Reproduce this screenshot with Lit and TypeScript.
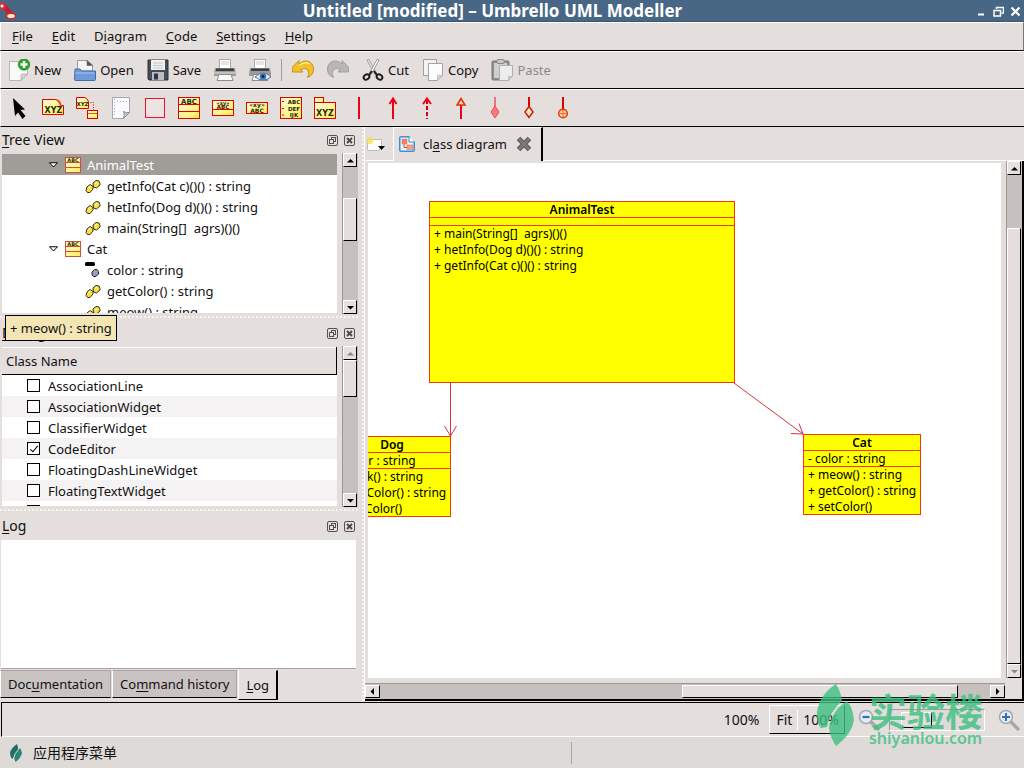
import { LitElement, html, css, svg, nothing } from "lit";
import type { TemplateResult } from "lit";
import { customElement, property } from "lit/decorators.js";
import { classMap } from "lit/directives/class-map.js";

/* ---------- helpers ---------- */

/** Renders "&File" with the letter after the ampersand underlined. */
const mnemonic = (label: string) => {
  const at = label.indexOf("&");
  if (at < 0) return html`<span>${label}</span>`;
  return html`<span>${label.slice(0, at)}<u>${label[at + 1]}</u>${label.slice(at + 2)}</span>`;
};

const frame = (size: number, body: unknown, box = size) =>
  html`<svg width=${size} height=${size} viewBox="0 0 ${box} ${box}" aria-hidden="true">${body}</svg>`;

const iconText = (x: number, y: number, size: number, text: string) =>
  svg`<text x=${x} y=${y} font-size=${size} font-family="DejaVu Sans, sans-serif" font-weight="bold" text-anchor="middle" fill="#2a2a00">${text}</text>`;

/* ---------- icons ---------- */

const gradients = svg`<defs>
  <linearGradient id="y" x1="0" y1="0" x2="1" y2="1"><stop offset="0" stop-color="#fffbe0"/><stop offset="1" stop-color="#ffee55"/></linearGradient>
</defs>`;

const icons: Record<string, () => TemplateResult> = {
  new: () => frame(22, svg`
    <path d="M1.500 2.500H19.500V15L13 21.500H1.500Z" fill="#fafafa" stroke="#b9b9b9"/>
    <path d="M13 21.500V16Q13 15 14 15H19.500Z" fill="#d4d4d4" stroke="#a8a8a8" stroke-width=".7"/>
    <circle cx="16" cy="5.500" r="5.800" fill="#2da32d" stroke="#15801b" stroke-width=".6"/>
    <path d="M16 2V9M12.500 5.500H19.500" stroke="#fff" stroke-width="2.400"/>`),
  open: () => frame(22, svg`
    <path d="M3.500 12V1.500H13L18.500 6V12Z" fill="#f4f4f4" stroke="#9a9a9a"/>
    <path d="M13 1.500V6.500H18.500Z" fill="#555" stroke="#666" stroke-width=".6"/>
    <path d="M1 10H6L8 12H21.500V20.500Q21.500 21.500 20.500 21.500H1.500Q.5 21.500.5 20.500Z" fill="#6f9bd8" stroke="#3f6cad"/>
    <path d="M1.500 14H20.500" stroke="#a9c6ef"/>`),
  save: () => frame(22, svg`
    <path d="M1 1H21V21H2L1 20Z" fill="#454d57" stroke="#2b3036"/>
    <rect x="4" y="1" width="14" height="10" fill="#f1f1f1"/>
    <path d="M6 4H16M6 6.500H16M6 9H16" stroke="#c6c6c6"/>
    <rect x="5" y="13" width="12" height="8" fill="#b9bcc0"/>
    <rect x="7" y="14.500" width="4" height="6" fill="#30363d"/>`),
  print: () => frame(22, svg`
    <rect x="5.500" y=".5" width="11" height="9" fill="#fff" stroke="#aaa"/>
    <path d="M7 3H15M7 5H15" stroke="#ccc"/>
    <path d="M1 9H21L22 14V17H0V14Z" fill="#9b9b9b"/>
    <path d="M2 9.500H20V12H2Z" fill="#3e3e3e"/>
    <path d="M0 14H22" stroke="#e5e5e5"/>
    <path d="M5 15.500H17L19 21.500H3Z" fill="#fafafa" stroke="#8d8d8d"/>`),
  preview: () => frame(22, svg`
    <rect x="5.500" y=".5" width="11" height="9" fill="#fff" stroke="#aaa"/>
    <path d="M7 3H15M7 5H15" stroke="#ccc"/>
    <path d="M1 9H21L22 14V17H0V14Z" fill="#9b9b9b"/>
    <path d="M2 9.500H20V12H2Z" fill="#3e3e3e"/>
    <path d="M5 15.500H17L19 21.500H3Z" fill="#fafafa" stroke="#8d8d8d"/>
    <path d="M6 18Q14 10 22 18Q14 24 6 18Z" fill="#eaf2fb" stroke="#56779c"/>
    <circle cx="14" cy="17.500" r="3.300" fill="#3b78b4"/><circle cx="14" cy="17.500" r="1.400" fill="#123"/>`),
  undo: () => frame(22, svg`<path d="M0 8.500L7 1.500V5Q12 .5 17 2.500Q22 5.500 21.500 11Q21 16.500 15.500 18.500Q18 14 16 11Q13 8 8.500 10.500L11 13H0.500Z" fill="#f2c12c" stroke="#c08a08" stroke-width=".9" stroke-linejoin="round"/>
    <path d="M7 6.500Q13 2 17.500 5" fill="none" stroke="#fbe48b" stroke-width="1.400"/>`),
  redo: () => frame(22, svg`<path d="M22 8.500L15 1.500V5Q10 .5 5 2.500Q0 5.500 .5 11Q1 16.500 6.500 18.500Q4 14 6 11Q9 8 13.500 10.500L11 13H21.500Z" fill="#b9b7b5" stroke="#999" stroke-width=".9" stroke-linejoin="round"/>`),
  cut: () => frame(22, svg`
    <path d="M5 1L7 .5L15 15L13 16Z" fill="#e8e8e8" stroke="#888" stroke-width=".7"/>
    <path d="M17 1L15 .5L7 15L9 16Z" fill="#fff" stroke="#777" stroke-width=".7"/>
    <g fill="none" stroke="#1c1c1c" stroke-width="2"><ellipse cx="4.500" cy="18" rx="3" ry="2.400" transform="rotate(-35 4.500 18)"/><ellipse cx="17.500" cy="18" rx="3" ry="2.400" transform="rotate(35 17.500 18)"/>
    <path d="M7 16L10 12M15 16L12 12"/></g>`),
  copy: () => frame(22, svg`
    <path d="M1.500 .5H14.500V16.500H1.500Z" fill="#f3f3f3" stroke="#9f9f9f"/>
    <path d="M6.500 4.500H20.500V16L15.500 21.500H6.500Z" fill="#fcfcfc" stroke="#a3a3a3"/>
    <path d="M15.500 21.500V16.500H20.500Z" fill="#d5d5d5" stroke="#aaa" stroke-width=".6"/>`),
  paste: () => frame(22, svg`
    <rect x="1" y="2" width="17" height="19" rx="1" fill="#8f8f8f" stroke="#777"/>
    <path d="M3 4H16V19H3Z" fill="#d0cfce"/>
    <rect x="6" y=".5" width="7" height="4" rx="1" fill="#c9c9c9" stroke="#8b8b8b"/>
    <path d="M8.500 6.500H21.500V17L17.500 21.500H8.500Z" fill="#ececec" stroke="#b0b0b0"/>
    <path d="M17.500 21.500V17.500H21.500" fill="#ccc" stroke="#aaa" stroke-width=".6"/>`),

  select: () => frame(22, svg`<path d="M5 1L17 12.500L12.500 13L17.500 19L14.500 22L10 15.500L7 19Z" fill="#000"/>`),
  label: () => frame(22, svg`${gradients}
    <path d="M.5 17.500V2.500H14.500L19.500 8.500H21.500V17.500Z" fill="url(#y)" stroke="#e00000"/>
    <path d="M13 2.500Q20 3 18 9.500" fill="none" stroke="#f04000" stroke-width="1.200"/>
    ${iconText(11.5, 16, 8, "XYZ")}`),
  labels: () => frame(22, svg`${gradients}
    <path d="M.5 11.500V.5H9Q12 2 12.500 5V11.500Z" fill="url(#y)" stroke="#e00000"/>
    ${iconText(6.5, 9, 5.500, "XYZ")}
    <path d="M12 5.500H17.500V13" fill="none" stroke="#e00000" stroke-dasharray="1 1.500"/>
    <rect x="11.500" y="13.500" width="10" height="8" fill="url(#y)" stroke="#e00000"/>
    <path d="M12 16.500H21" stroke="#e06000"/>`),
  note: () => frame(22, svg`
    <path d="M2.500 .5H19.500V15.500L13.500 21.500H2.500Z" fill="#fbfbfd" stroke="#a6a6b0"/>
    <path d="M13.500 21.500Q15 17 13.500 14.500Q17 16.500 19.500 15.500Z" fill="#c6c6d0" stroke="#8b8b96"/>
    <path d="M4.500 2V20M7 4.500H17" stroke="#a9abb8" stroke-dasharray="1 2"/>`),
  box: () => frame(22, svg`<rect x="1.500" y="1.500" width="19" height="19" fill="#ece3e3" stroke="#f01030"/>`),
  klass: () => frame(22, svg`${gradients}
    <rect x=".5" y=".5" width="21" height="21" fill="url(#y)" stroke="#e00000"/>
    <path d="M1 7.500H21M1 14.500H21" stroke="#e00000"/>${iconText(11, 6.5, 7, "ABC")}`),
  iface: () => frame(22, svg`${gradients}
    <rect x=".5" y="3.500" width="21" height="15" fill="url(#y)" stroke="#e00000"/>
    <path d="M1 12.500H21" stroke="#e00000"/>${iconText(11, 7.5, 5, "\u00abxy\u00bb")}${iconText(11, 11.5, 5.500, "ABC")}`),
  datatype: () => frame(22, svg`${gradients}
    <rect x=".5" y="5.500" width="21" height="11" fill="url(#y)" stroke="#e00000"/>
    ${iconText(11, 10, 6, "\u00abxy\u00bb")}${iconText(11, 15.5, 6, "ABC")}`),
  enumeration: () => frame(22, svg`${gradients}
    <rect x=".5" y=".5" width="21" height="21" fill="url(#y)" stroke="#e00000"/>
    <path d="M2 4.500H4M2 11.500H4M2 18H4" stroke="#e00000"/>
    ${iconText(14, 7, 5.500, "ABC")}${iconText(14, 13.5, 5.500, "DEF")}${iconText(14, 20, 5.500, "IJK")}`),
  pkg: () => frame(22, svg`${gradients}
    <rect x=".5" y=".5" width="9" height="6" fill="url(#y)" stroke="#e00000"/>
    <rect x=".5" y="5.500" width="21" height="16" fill="url(#y)" stroke="#e00000"/>${iconText(11, 18.5, 8, "XYZ")}`),
  line: () => frame(22, svg`<path d="M11 0V22" stroke="#f00018" stroke-width="2"/>`),
  arrow: () => frame(22, svg`<path d="M11 1V22M7.500 7L11 1.500L14.500 7" fill="none" stroke="#f00018" stroke-width="2"/>`),
  dashed: () => frame(22, svg`<path d="M7 7L11 1.500L15 7" fill="none" stroke="#f00018" stroke-width="2"/><path d="M11 3V22" stroke="#d00018" stroke-width="2" stroke-dasharray="4 2"/>`),
  general: () => frame(22, svg`<path d="M11 8V22" stroke="#f00018" stroke-width="2"/><path d="M11 1.500L15 8H7Z" fill="#ffd9a0" stroke="#e03010" stroke-width="1.500"/>`),
  compose: () => frame(22, svg`<path d="M11 0V10" stroke="#f05060" stroke-width="1.500"/><path d="M11 9L15 15L11 21L7 15Z" fill="#f77" stroke="#e05060"/>`),
  aggregate: () => frame(22, svg`<path d="M11 0V10" stroke="#e00000" stroke-width="2"/><path d="M11 9.500L15 15L11 20.500L7 15Z" fill="#ffe4c0" stroke="#c82000" stroke-width="1.500"/>`),
  contain: () => frame(22, svg`<path d="M11 0V21" stroke="#e00000" stroke-width="2"/><circle cx="11" cy="16.500" r="4.300" fill="#ffd0a0" stroke="#e83a00" stroke-width="1.500"/><path d="M11 13V20M7.500 16.500H14.500" stroke="#f07030"/>`),

  classSmall: () => frame(16, svg`${gradients}
    <rect x=".5" y=".5" width="15" height="15" fill="url(#y)" stroke="#c8503c"/>
    <path d="M1 5.500H15M1 10.500H15" stroke="#c8503c"/>${iconText(8, 5, 5, "ABC")}`),
  method: () => frame(16, svg`<g fill="#f5e04a" stroke="#33300a" stroke-width="1">
    <path d="M2 9L5 6.500L8 8.500V11L5 14.500H2.500L1 12.500Z"/><path d="M8 5L11 2.500L14 3L15 5.500V7L11.500 10L8.500 9Z"/></g>
    <path d="M3 10L5.500 8M10 5.500L12 4" stroke="#fffad0"/>`),
  attribute: () => frame(16, svg`<rect x="0" y="0" width="10" height="4" rx="1.500" fill="#000"/>
    <path d="M7 10L9.500 7.500H12L13.500 9.500V12L11 14.500H8.500L7 13Z" fill="#9a9cba" stroke="#222230"/>`),
  diagram: () => frame(16, svg`<rect x=".75" y=".75" width="14.500" height="14.500" rx="1" fill="#eaf4fd" stroke="#3d8fd6" stroke-width="1.500"/>
    <path d="M10 0L16 6V0Z" fill="#e4dedc"/><path d="M10 1V6H15" fill="#fff" stroke="#3d8fd6"/>
    <rect x="3" y="3" width="5" height="5" fill="#f08060" stroke="#e88468" stroke-width=".6"/><rect x="8" y="9" width="6" height="4.500" fill="#f6a088" stroke="#e07850" stroke-width=".6"/>
    <path d="M5 8V11.500H8" fill="none" stroke="#d8502c"/>`),
  closeTab: () => frame(16, svg`<path d="M2.500 2.500L13.500 13.500M13.500 2.500L2.500 13.500" stroke="#5e5c5b" stroke-width="5"/><path d="M3 3L13 13M13 3L3 13" stroke="#7d7b79" stroke-width="2.500"/>`),
  newTab: () => frame(22, svg`<path d="M2.500 5.500H16.500V13L13.500 16.500H4Q2.500 16.500 2.500 15Z" fill="#fdfdfb" stroke="#b5b2ae" stroke-width=".8"/>
    <circle cx="5" cy="6.500" r="3.500" fill="#f4e04c" opacity=".75"/><path d="M13 12H20L16.500 16Z" fill="#000"/>`),
  dockFloat: () => frame(11, svg`<rect x=".5" y=".5" width="10" height="10" rx="1.500" fill="none" stroke="#55514f"/><rect x="4.500" y="2.500" width="4" height="4" fill="none" stroke="#55514f"/><rect x="2.500" y="4.500" width="4" height="4" fill="#e6dfdd" stroke="#55514f"/>`),
  dockClose: () => frame(11, svg`<rect x=".5" y=".5" width="10" height="10" rx="1.500" fill="none" stroke="#55514f"/><path d="M3 3L8 8M8 3L3 8" stroke="#4a4745" stroke-width="1.800"/>`),
  zoomOut: () => frame(22, svg`<path d="M13 13L20 20" stroke="#a8a8a8" stroke-width="3.500" stroke-linecap="round"/><circle cx="8" cy="8" r="6.500" fill="#e4edf6" stroke="#a3a9b0" stroke-width="1.500"/><path d="M4.500 8H11.500" stroke="#3b6fb5" stroke-width="2.200"/>`),
  zoomIn: () => frame(22, svg`<path d="M13 13L20 20" stroke="#a8a8a8" stroke-width="3.500" stroke-linecap="round"/><circle cx="8" cy="8" r="6.500" fill="#e4edf6" stroke="#a3a9b0" stroke-width="1.500"/><path d="M4 8H12M8 4V12" stroke="#3b6fb5" stroke-width="2"/>`),
  appLogo: () => frame(18, svg`<path d="M0 2L4 0L14 12L9 15Z" fill="#c4202c"/><circle cx="2" cy="4" r="3.500" fill="#d8323c"/><circle cx="2" cy="4" r="1.500" fill="#fff"/><ellipse cx="11" cy="14" rx="4.500" ry="2.800" fill="#ffe6d8" stroke="#c83024" stroke-width="1.500"/>`),
  leaf: () => frame(18, svg`<path d="M10 0Q4 4 3 9Q3 12 4.500 14L5 15Q11 10 11.500 6Q11 3 10 0Z" fill="#1f6f62"/><path d="M13 4Q8 8 7 12Q7 15 8.500 18Q14 14 15 9Q14.500 6 13 4Z" fill="#2b8474"/><path d="M6 15.500Q7 10 12.500 4" fill="none" stroke="#dedad7"/>`),
};

/* ---------- shared rules ---------- */

const base = css`
  :host { box-sizing: border-box; }
  *, *::before, *::after { box-sizing: border-box; }
  svg { display: block; flex: none; }
  button { font: inherit; color: inherit; background: none; border: 0; margin: 0; padding: 0; }
  u { text-decoration: underline; text-underline-offset: 2px; text-decoration-thickness: 1px; }
`;

/* ---------- scroll bar ---------- */

@customElement("scroll-strip")
class ScrollStrip extends LitElement {
  @property({ type: Boolean, reflect: true }) horizontal = false;
  @property({ type: Number }) before = 0;
  @property({ type: Number }) size = 1;
  @property({ type: Number }) after = 0;

  static styles = [base, css`
    :host { display: flex; flex-direction: column; flex: none; width: 16px; padding: 0 1px 0 0; border-left: 1px solid #9d9795; background: #c6c1bf; }
    :host([horizontal]) { flex-direction: row; width: auto; height: 16px; padding: 1px 0; border-left: 0; border-top: 1px solid #9d9795; }
    button { display: grid; place-items: center; flex: none; width: 100%; height: 14px; background: #e6e1df; border: 1px solid; border-color: #fff #000 #000 #fff; }
    :host([horizontal]) button { width: 15px; height: 100%; }
    .thumb { background: #e4dfdd; border: 1px solid; border-color: #fff #000 #000 #fff; }
    .space, .thumb { min-width: 0; min-height: 0; flex-basis: 0; }
  `];

  private arrow(d: string, faded: boolean) {
    return html`<svg width="7" height="7" viewBox="0 0 7 7" aria-hidden="true"><path d=${d} fill=${faded ? "#8b8785" : "#000"}></path></svg>`;
  }

  render() {
    const [back, next] = this.horizontal
      ? ["M5 0V7L1.500 3.500Z", "M2 0V7L5.500 3.500Z"]
      : ["M0 5.500H7L3.500 2Z", "M0 2H7L3.500 5.500Z"];
    return html`
      <button aria-label="Back">${this.arrow(back, this.before === 0)}</button>
      <div class="space" style="flex-grow:${this.before}"></div>
      <div class="thumb" style="flex-grow:${this.size}"></div>
      <div class="space" style="flex-grow:${this.after}"></div>
      <button aria-label="Forward">${this.arrow(next, this.after === 0)}</button>`;
  }
}

/* ---------- dock panel ---------- */

@customElement("dock-panel")
class DockPanel extends LitElement {
  @property() heading = "";

  static styles = [base, css`
    :host { display: flex; flex-direction: column; min-height: 0; }
    header { display: flex; align-items: center; gap: 6px; flex: none; height: 26px; padding: 0 3px 0 2px; font-size: 14px; line-height: 20px; }
    h2 { flex: 1; margin: 0; font: inherit; }
    .body { flex: 1; min-height: 0; display: flex; }
  `];

  render() {
    return html`
      <header>
        <h2>${mnemonic(this.heading)}</h2>
        <button aria-label="Float">${icons.dockFloat()}</button>
        <button aria-label="Close">${icons.dockClose()}</button>
      </header>
      <div class="body"><slot></slot></div>`;
  }
}

/* ---------- UML canvas ---------- */

interface UmlClass { name: string; x: number; y: number; w: number; h: number; attributes: string[]; operations: string[]; }

const classes: UmlClass[] = [
  { name: "AnimalTest", x: 61, y: 38, w: 306, h: 182, attributes: [], operations: ["+ main(String[]\u00a0 agrs)()()", "+ hetInfo(Dog d)()() : string", "+ getInfo(Cat c)()() : string"] },
  { name: "Dog", x: -35, y: 273, w: 118, h: 81, attributes: ["- color : string"], operations: ["+ bark() : string", "+ getColor() : string", "+ setColor()"] },
  { name: "Cat", x: 435, y: 271, w: 118, h: 81, attributes: ["- color : string"], operations: ["+ meow() : string", "+ getColor() : string", "+ setColor()"] },
];

@customElement("uml-canvas")
class UmlCanvas extends LitElement {
  static styles = [base, css`
    :host { display: block; position: relative; overflow: hidden; background: #fff; font-size: 12px; line-height: 16px; color: #000; }
    .links { position: absolute; inset: 0; width: 100%; height: 100%; fill: none; stroke: #d8323c; stroke-width: 1; }
    .node { position: absolute; background: #ff0; border: 1px solid #f03a10; }
    .name { text-align: center; font-weight: 600; height: 15px; line-height: 16px; }
    .part { border-top: 1px solid #f03a10; padding: 0 4px; min-height: 8px; }
    .row { height: 16px; white-space: pre; }
    .part.attributes .row { height: 15px; }
  `];

  render() {
    return html`
      ${classes.map((c) => html`
        <div class="node" style="left:${c.x}px;top:${c.y}px;width:${c.w}px;height:${c.h}px">
          <div class="name">${c.name}</div>
          <div class="part attributes">${c.attributes.map((a) => html`<div class="row">${a}</div>`)}</div>
          <div class="part">${c.operations.map((o) => html`<div class="row">${o}</div>`)}</div>
        </div>`)}
      <svg class="links" aria-hidden="true">
        <path d="M82.500 220V273M76.500 263L82.500 273L88.500 263"></path>
        <path d="M366 220L435 271M423 270.500L435 271L431 260.500"></path>
      </svg>`;
  }
}

/* ---------- application ---------- */

type Tool = { icon: string; label?: string; disabled?: boolean } | "separator";

@customElement("app-root")
class AppRoot extends LitElement {
  private menus = ["&File", "&Edit", "D&iagram", "&Code", "&Settings", "&Help"];

  private tools: Tool[] = [
    { icon: "new", label: "New" }, { icon: "open", label: "Open" }, { icon: "save", label: "Save" },
    { icon: "print" }, { icon: "preview" }, "separator", { icon: "undo" }, { icon: "redo", disabled: true },
    { icon: "cut", label: "Cut" }, { icon: "copy", label: "Copy" }, { icon: "paste", label: "Paste", disabled: true },
  ];

  private shapes = ["select", "label", "labels", "note", "box", "klass", "iface", "datatype", "enumeration", "pkg",
    "line", "arrow", "dashed", "general", "compose", "aggregate", "contain"];

  private tree = [
    { kind: "classSmall", text: "AnimalTest", selected: true },
    { kind: "method", text: "getInfo(Cat c)()() : string" },
    { kind: "method", text: "hetInfo(Dog d)()() : string" },
    { kind: "method", text: "main(String[]\u00a0 agrs)()()" },
    { kind: "classSmall", text: "Cat" },
    { kind: "attribute", text: "color : string" },
    { kind: "method", text: "getColor() : string" },
    { kind: "method", text: "meow() : string" },
  ];

  private debugClasses = ["AssociationLine", "AssociationWidget", "ClassifierWidget", "CodeEditor", "FloatingDashLineWidget", "FloatingTextWidget", ""];

  static styles = [base, css`
    :host {
      --face: #e4dedc; --edge: #000; --light: #fff;
      display: flex; flex-direction: column; height: 100vh; position: relative; overflow: hidden;
      background: var(--face); color: #111;
      font-family: "Noto Sans", "Noto Sans CJK SC", sans-serif; font-size: 13px; line-height: 20px;
    }
    .title { display: flex; align-items: center; flex: none; height: 22px; background: #486785; color: #fff; border-bottom: 1px solid #3b5873; }
    .title h1 { flex: 1; margin: 0; padding-top: 1px; text-align: center; font-size: 17px; line-height: 22px; font-weight: 700; }
    .title .side { width: 48px; display: flex; }
    .title .side:first-child { width: 9px; }
    .title .end { justify-content: flex-end; gap: 6px; padding: 2px 3px 0 0; }

    .menu, .tools, .shapes { display: flex; align-items: center; flex: none; border-top: 1px solid var(--light); border-bottom: 1px solid var(--edge); border-left: 1px solid #fff; }
    .menu { height: 29px; padding: 0 2px 1px; gap: 1px; border-right: 1px solid #777; }
    .menu button { padding: 0 9px; }
    .tools { height: 38px; padding: 0 1px; gap: 1px; }
    .tools button { display: flex; align-items: center; gap: 4px; padding: 0 6px; }
    .tools button:disabled { color: #8f8a88; }
    .tools .sep { width: 1px; height: 22px; margin: 0 3px; background: #a19c9a; }
    .shapes { height: 38px; padding-left: 1px; }
    .shapes button { width: 34px; display: grid; place-items: center; }

    .main { flex: 1; min-height: 0; display: flex; }
    .left { flex: none; width: 35%; max-width: 358px; display: flex; flex-direction: column; position: relative; }
    .tree, .debug { flex: 187 1 0; }
    .log { flex: 156 1 0; }
    .grip { flex: none; height: 6px; background-image: repeating-linear-gradient(90deg, #f6f3f2 0 2px, transparent 2px 4px); background-size: 100% 2px; background-repeat: no-repeat; background-position: 0 2px; }
    .vgrip { flex: none; width: 7px; background-image: repeating-linear-gradient(0deg, #f6f3f2 0 2px, transparent 2px 4px); background-size: 2px 100%; background-repeat: no-repeat; background-position: 4px 0; border-right: 1px solid #fff; }

    .sheet { flex: 1; min-width: 0; min-height: 0; overflow: hidden; background: #fff; margin: 1px 5px 1px 2px; }
    .wide { margin: 1px 2px 0 1px; border-bottom: 1px solid #a9a4a2; }
    .tree-list { margin-block: 0; padding: 0; list-style: none; }
    .tree-list li { display: flex; align-items: center; gap: 6px; height: 21px; padding-left: 83px; white-space: nowrap; }
    .tree-list li.branch { padding-left: 46px; }
    .tree-list li.selected { background: #a09d99; color: #fff; }

    table { width: 100%; border-collapse: collapse; }
    th { height: 27px; padding: 0 4px; text-align: left; font-weight: 400; background: #e4dedc; border-top: 1px solid #fff; border-right: 1px solid #000; border-bottom: 1px solid #000; }
    td { height: 21px; padding: 0 0 0 25px; }
    tr:nth-child(even) td { background: #f4f2f3; }
    td div { display: flex; align-items: center; gap: 8px; height: 21px; }
    input[type="checkbox"] { appearance: none; margin: 0; width: 13px; height: 13px; border: 1px solid #000; background: #fff; display: grid; place-items: center; }
    input[type="checkbox"]:checked::after { content: ""; width: 4px; height: 8px; border: solid #000; border-width: 0 1px 1px 0; transform: rotate(40deg); }
    input[type="checkbox"]:checked { padding-bottom: 2px; }

    .tip { position: absolute; left: 5px; top: 188px; padding: 1px 4px; border: 1px solid #000; background: #f3e6b4; line-height: 22px; z-index: 2; }

    .dock-tabs { flex: none; display: flex; align-items: flex-start; height: 32px; padding: 1px 0 0; gap: 1px; }
    .dock-tabs button { height: 28px; padding: 0 7px; background: #c9c4c1; border: 1px solid; border-color: #a9a4a2 #a9a4a2 #000 #fff; white-space: nowrap; }
    .dock-tabs button.on { height: 30px; background: var(--face); border-color: transparent #000 #000 #fff; border-right-width: 2px; }

    .right { flex: 1; min-width: 0; display: flex; flex-direction: column; border-right: 2px solid #000; border-bottom: 2px solid #000; }
    .tabs { flex: none; display: flex; align-items: stretch; height: 34px; margin-right: -2px; background: var(--face); border-bottom: 1px solid #fff; }
    .tabs .add { width: 28px; padding-top: 3px; }
    .tab { display: flex; align-items: center; gap: 8px; padding: 0 8px 1px 5px; border-left: 1px solid #fff; border-top: 1px solid #fff; border-right: 2px solid #000; margin-bottom: -1px; background: var(--face); }
    .tab button { padding: 0 1px; }
    .view { flex: 1; min-height: 0; display: flex; padding-bottom: 5px; }
    uml-canvas { flex: 1; margin: 2px 5px 0 3px; }
    .hrow { flex: none; display: flex; padding-right: 17px; }
    .hrow scroll-strip { flex: 1; }

    .status { flex: none; display: flex; align-items: center; justify-content: flex-end; height: 35px; border: solid #000; border-width: 1px 0 0 1px; border-bottom: 1px solid #fff; margin: 1px 0 0 1px; padding-right: 4px; font-size: 14px; }
    .zoom { display: flex; align-items: center; height: 29px; margin: 0 13px 0 10px; border: 1px solid; border-color: #fff #000 #000 #fff; }
    .zoom button { padding: 0 5px 0 6px; }
    .zoom button + button { padding: 0 5px; border-left: 1px solid #fff; }
    input[type="range"] { appearance: none; width: 96px; height: 22px; margin: 0 13px 0 9px; background: #e0dbd9; border: 1px solid; border-color: #a09b99 #fff #fff #a09b99; }
    input[type="range"]::-webkit-slider-thumb { appearance: none; width: 31px; height: 16px; background: #e4dedc; border: 1px solid; border-color: #fff #000 #000 #fff; }

    .task { flex: none; display: flex; align-items: center; height: 31px; background: #dedad7; font-size: 14px; }
    .task button { display: flex; align-items: center; gap: 8px; padding-left: 7px; width: 572px; height: 22px; border-right: 1px solid #aaa5a2; }

    .mark { position: absolute; right: 41px; bottom: 16px; display: flex; align-items: center; gap: 15px; color: #3cc080; opacity: .8; pointer-events: none; z-index: 3; }
    .mark svg { margin-bottom: 6px; }
    .mark strong { display: block; font: 700 38px/40px "Noto Sans CJK SC", sans-serif; }
    .mark em { display: block; font: 600 16px/16px "Noto Sans", sans-serif; }
  `];

  private renderTool(tool: Tool) {
    if (tool === "separator") return html`<span class="sep"></span>`;
    return html`<button ?disabled=${!!tool.disabled} aria-label=${tool.label ?? tool.icon}>${icons[tool.icon]()}${tool.label ?? nothing}</button>`;
  }

  render() {
    return html`
      <div class="title">
        <div class="side">${icons.appLogo()}</div>
        <h1>Untitled [modified] – Umbrello UML Modeller</h1>
        <div class="side end">
          <button aria-label="Minimize">${frame(11, svg`<path d="M2 8.500H8" stroke="#fff" stroke-width="2"/>`)}</button>
          <button aria-label="Restore">${frame(11, svg`<path d="M3.500 3V1.500H10.500V7H8.500" fill="none" stroke="#fff" stroke-width="1.500"/><path d="M1 4.500H7.500V10H1Z" fill="none" stroke="#fff" stroke-width="1.500"/>`)}</button>
          <button aria-label="Close">${frame(11, svg`<path d="M1.500 1.500L9.500 9.500M9.500 1.500L1.500 9.500" stroke="#fff" stroke-width="2.200"/>`)}</button>
        </div>
      </div>
      <nav class="menu">${this.menus.map((m) => html`<button>${mnemonic(m)}</button>`)}</nav>
      <div class="tools">${this.tools.map((t) => this.renderTool(t))}</div>
      <div class="shapes">${this.shapes.map((s) => html`<button aria-label=${s}>${icons[s]()}</button>`)}</div>

      <div class="main">
        <section class="left">
          <dock-panel class="tree" heading="&Tree View">
            <div class="sheet">
              <ul class="tree-list">
                ${this.tree.map((n) => {
                  const branch = n.kind === "classSmall";
                  return html`<li class=${classMap({ branch, selected: !!n.selected })}>
                    ${branch ? html`<svg width="11" height="6" viewBox="0 0 11 6" aria-hidden="true"><path d="M1.500 .75H9.500L5.500 5Z" fill="#fff" stroke="#000"></path></svg>` : nothing}${icons[n.kind]()}<span>${n.text}</span></li>`;
                })}
              </ul>
            </div>
            <scroll-strip before="31" size="42" after="60"></scroll-strip>
          </dock-panel>
          <div class="grip"></div>
          <dock-panel class="debug" heading="&Debug">
            <div class="sheet">
              <table>
                <thead><tr><th id="class-name">Class Name</th></tr></thead>
                <tbody>
                  ${this.debugClasses.map((name, i) => html`<tr><td><div>
                    <input type="checkbox" id="c${i}" aria-labelledby=${name ? `l${i}` : "class-name"} ?checked=${name === "CodeEditor"}>
                    ${name ? html`<label id="l${i}" for="c${i}">${name}</label>` : nothing}</div></td></tr>`)}
                </tbody>
              </table>
            </div>
            <scroll-strip before="0" size="36" after="97"></scroll-strip>
          </dock-panel>
          <div class="grip"></div>
          <dock-panel class="log" heading="&Log"><div class="sheet wide"></div></dock-panel>
          <div class="dock-tabs">
            <button>${mnemonic("Doc&umentation")}</button>
            <button>${mnemonic("Co&mmand history")}</button>
            <button class="on">${mnemonic("&Log")}</button>
          </div>
          <div class="tip" role="tooltip">+ meow() : string</div>
        </section>
        <div class="vgrip"></div>
        <section class="right">
          <div class="tabs">
            <button class="add" aria-label="New diagram">${icons.newTab()}</button>
            <div class="tab">${icons.diagram()}${mnemonic("cl&ass diagram")}<button aria-label="Close tab">${icons.closeTab()}</button></div>
          </div>
          <div class="view"><uml-canvas></uml-canvas><scroll-strip before="54" size="440" after="0"></scroll-strip></div>
          <div class="hrow"><scroll-strip horizontal before="303" size="275" after="32"></scroll-strip></div>
        </section>
      </div>

      <div class="status">
        <span>100%</span>
        <div class="zoom"><button>Fit</button><button>100%</button></div>
        ${icons.zoomOut()}
        <input type="range" min="0" max="100" value="17" aria-label="Zoom">
        ${icons.zoomIn()}
      </div>
      <div class="task"><button>${icons.leaf()}<span>应用程序菜单</span></button></div>

      <div class="mark" aria-hidden="true">
        <svg width="38" height="62" viewBox="0 0 38 62"><path d="M20 0Q4 10 1 28Q0 38 5 44L11 43Q14 27 26 17Q25 8 20 0Z" fill="currentColor"></path><path d="M31 17Q16 26 13 44Q14 53 20 62Q36 50 38 36Q37 24 31 17Z" fill="currentColor"></path></svg>
        <div><strong>实验楼</strong><em>shiyanlou.com</em></div>
      </div>`;
  }
}
